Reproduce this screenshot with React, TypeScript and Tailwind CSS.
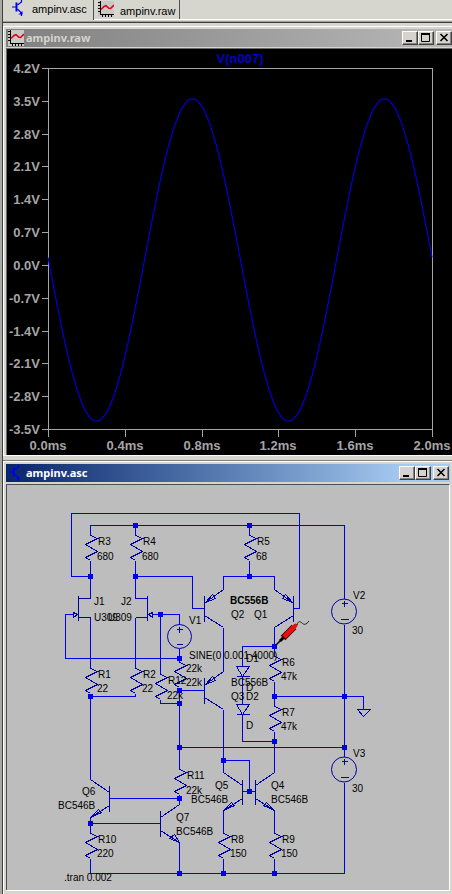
import React from "react";

const YTICKS = ["4.2V", "3.5V", "2.8V", "2.1V", "1.4V", "0.7V", "0.0V", "-0.7V", "-1.4V", "-2.1V", "-2.8V", "-3.5V"];
const XTICKS = ["0.0ms", "0.4ms", "0.8ms", "1.2ms", "1.6ms", "2.0ms"];

// Output voltage sampled once per pixel column.
const TRACE = Array.from({ length: 385 }, (_, i) => {
  const x = 48 + i;
  const y = 260 + 161 * Math.sin((2 * Math.PI * (x - 48.5)) / 192);
  return `${x},${y.toFixed(1)}`;
}).join(" ");

function PlotIcon() {
  return (
    <svg className="block size-4 shrink-0" viewBox="0 0 16 16" fill="none" aria-hidden="true">
      <path d="M0 0h16v16H0z" fill="#c9c9c4" />
      <path d="M2.500 0v13.500M2 13.500h14M0 1.500h2M0 4.500h2M0 7.500h2M0 10.500h2M4.500 14v2M7.500 14v2M10.500 14v2M13.500 14v2" stroke="#000" shapeRendering="crispEdges" />
      <path d="M3 8.500l3-3 2-.8 3 2.600 1.500.2L16 4" stroke="#e00018" strokeWidth="1.600" />
    </svg>
  );
}

function TransistorIcon() {
  return (
    <svg className="block size-4 shrink-0" viewBox="0 0 16 16" fill="none" stroke="#0000f0" aria-hidden="true">
      <path d="M1 7h4M10.500 0v2L6.500 5M6.500 9l4 4v3" strokeWidth="1.200" />
      <path d="M5.500 2.500v9" strokeWidth="2" />
      <path d="M11.500 11v3.500h-4z" fill="#0000f0" stroke="none" />
    </svg>
  );
}

function CaptionButton({ label, children }: { label: string; children: React.ReactNode }) {
  return (
    <button
      type="button"
      aria-label={label}
      className="flex h-[14px] w-4 items-center justify-center border border-t-white border-r-[#404040] border-b-[#404040] border-l-white bg-[#d6d3ce] shadow-[inset_-1px_-1px_0_#848284]"
    >
      <svg className="block h-3 w-[14px]" viewBox="0 0 14 12" fill="none" stroke="#000" aria-hidden="true">
        {children}
      </svg>
    </button>
  );
}

function CaptionButtons() {
  return (
    <div className="flex shrink-0 gap-[2px]">
      <div className="flex">
        <CaptionButton label="Minimize">
          <path d="M3 9h6" strokeWidth="2" />
        </CaptionButton>
        <CaptionButton label="Maximize">
          <path d="M2 2h9" strokeWidth="2" />
          <path d="M2.500 1v8.500h8V1" />
        </CaptionButton>
      </div>
      <CaptionButton label="Close">
        <path d="M3.500 2l7 7M10.500 2l-7 7" strokeWidth="1.600" />
      </CaptionButton>
    </div>
  );
}

const ZIG = "l7 3l-12 6l12 7l-12 6l5 3";
const RESISTORS = [
  [90, 535], [135, 535], [249, 535], [90, 668], [135, 668], [160, 674], [179, 662], [274, 656],
  [274, 706], [179, 769], [90, 833], [223, 833], [274, 833],
];

const WIRES = [
  "M90 576H71V513H299V608H293",
  "M90 535V525H344V598",
  "M135 525V535M249 525V535",
  "M90 560V598M135 560V598M249 560V576",
  "M135 576H192V608H204",
  "M73 614H65V658H179",
  "M90 617V668M135 617V668",
  "M90 693V696H135V693",
  "M90 696V779",
  "M152 614H179V624M160 614V674M160 699V703H179",
  "M179 648V662M179 687V769M179 690H204",
  "M179 794V804M109 798H179M90 817V833M90 823H160M179 842V873",
  "M223 589V576H274V589",
  "M223 627V671M223 709V772M223 760H249V791M242 791H255",
  "M274 627V656M274 681V706M274 731V772",
  "M274 646H242V666M242 676V704M242 714V741H274",
  "M274 696H363V709",
  "M344 624V756M344 782V873H90V858",
  "M179 747H344",
  "M223 810V833M274 810V833M223 858V873M274 858V873",
];

const SYMBOLS = [
  "M78 595V620M78 598H90M78 617H90M73 612V617L77 614Z",
  "M147 595V620M147 598H135M147 617H135M152 612V617L148 614Z",
  "M204 595V621M223 589L205 602M205 602L212 594L215 598ZM204 615L223 627",
  "M293 595V621M274 589L292 602M292 602L285 594L282 598ZM293 615L274 627",
  "M204 677V703M223 671L205 684M205 684L212 676L215 680ZM204 697L223 709",
  "M242 779V804M223 772L242 785M242 798L223 810M223 810L231 802L234 805Z",
  "M255 779V804M274 772L255 785M255 798L274 810M274 810L266 802L263 805Z",
  "M109 785V811M90 779L109 792M109 805L90 817M90 817L98 809L101 812Z",
  "M160 810V836M179 804L160 817M160 830L179 842M179 842L174 834L169 838Z",
  "M236 666H249L242 676ZM236 676H249",
  "M236 704H249L242 714ZM236 714H249",
  "M357 709H370L363 716Z",
  "M179 626V632M176 629H182M176 644H182",
  "M344 600V606M341 603H347M340 619H348",
  "M344 758V764M341 761H347M340 777H348",
];

const NODES = [
  [135, 525], [249, 525], [90, 576], [135, 576], [249, 576], [160, 614], [179, 658], [179, 690],
  [179, 703], [90, 696], [179, 747], [274, 646], [274, 696], [344, 696], [344, 747], [274, 741],
  [223, 760], [249, 791], [179, 798], [90, 823], [179, 873], [223, 873], [274, 873],
];

const LABELS: [number, number, string][] = [
  [98, 545, "R3"], [97, 560, "680"], [143, 545, "R4"], [142, 560, "680"], [257, 545, "R5"], [256, 560, "68"],
  [94, 605, "J1"], [121, 605, "J2"], [94, 621, "U309"], [108, 621, "U309"], [189, 624, "V1"],
  [231, 618, "Q2"], [254, 618, "Q1"], [353, 599, "V2"], [352, 634, "30"], [189, 659, "SINE(0 0.001 4000)"],
  [98, 678, "R1"], [97, 692, "22"], [143, 678, "R2"], [142, 692, "22"], [168, 684, "R12"], [167, 699, "22k"],
  [186, 672, "22k"], [186, 686, "22k"], [231, 686, "BC556B"], [246, 662, "D1"], [246, 691, "D"],
  [231, 700, "Q3"], [246, 700, "D2"], [246, 729, "D"], [282, 666, "R6"], [281, 680, "47k"],
  [282, 716, "R7"], [281, 730, "47k"], [353, 757, "V3"], [352, 792, "30"], [187, 779, "R11"], [186, 794, "22k"],
  [82, 795, "Q6"], [58, 809, "BC546B"], [176, 821, "Q7"], [176, 835, "BC546B"], [98, 843, "R10"],
  [97, 857, "220"], [64, 881, ".tran 0.002"], [215, 789, "Q5"], [191, 803, "BC546B"], [271, 789, "Q4"],
  [271, 803, "BC546B"], [231, 843, "R8"], [230, 857, "150"], [282, 843, "R9"], [281, 857, "150"],
];

function Waveform() {
  return (
    <svg className="block w-full bg-black" viewBox="7 49 445 406" role="img" aria-label="V(n007) waveform">
      <g transform="translate(.5 .5)" stroke="#a5a5a5" fill="none" shapeRendering="crispEdges">
        <path d="M48 68H432V429H48Z" />
        {YTICKS.map((t, i) => (
          <path key={t} d={`M41 ${Math.round(68 + (i * 361) / 11)}h7`} />
        ))}
        {XTICKS.map((t, i) => (
          <path key={t} d={`M${Math.round(48 + i * 76.8)} 429v7`} />
        ))}
      </g>
      <polyline points={TRACE} fill="none" stroke="#0000d8" strokeWidth="1.200" />
      <g className="font-['Liberation_Sans',sans-serif] text-[13px] font-bold" fill="#a5a5a5">
        {YTICKS.map((t, i) => (
          <text key={t} x="40" y={Math.round(73 + (i * 361) / 11)} textAnchor="end">{t}</text>
        ))}
        {XTICKS.map((t, i) => (
          <text key={t} x={Math.round(48 + i * 76.8)} y="450" textAnchor="middle">{t}</text>
        ))}
        <text x="240" y="63" textAnchor="middle" fill="#0000c8">V(n007)</text>
      </g>
    </svg>
  );
}

function Schematic() {
  return (
    <svg className="block w-full bg-[#bdbdbd]" viewBox="7 485 442 405" role="img" aria-label="Amplifier schematic">
      <g transform="translate(.5 .5)" fill="none" shapeRendering="crispEdges">
        <path d={WIRES.join("")} stroke="#0000e8" />
        <path d={SYMBOLS.join("")} stroke="#0000a8" />
        <path d={RESISTORS.map(([x, y]) => `M${x} ${y}${ZIG}`).join("")} stroke="#0000a8" />
      </g>
      <g fill="none" stroke="#0000a8">
        <circle cx="179.500" cy="636.500" r="12" />
        <circle cx="344" cy="611.500" r="12.500" />
        <circle cx="344" cy="769.500" r="12.500" />
      </g>
      <g fill="#0000e8" shapeRendering="crispEdges">
        {NODES.map(([x, y]) => (
          <rect key={`${x}-${y}`} x={x - 2} y={y - 2} width="5" height="5" />
        ))}
      </g>
      <g className="font-['Liberation_Sans',sans-serif] text-[10px]" fill="#000">
        {LABELS.map(([x, y, t]) => (
          <text key={`${x}-${y}`} x={x} y={y}>{t}</text>
        ))}
        <text x="230" y="604" className="font-bold">BC556B</text>
      </g>
      <g fill="none">
        <path d="M276 645l7-7" stroke="#000" strokeWidth="1.500" />
        <path d="M280 641l4-4" stroke="#000" strokeWidth="3" />
        <path d="M283 638l11-11" stroke="#400000" strokeWidth="6.500" />
        <path d="M284 637l9.500-9.500" stroke="#e81010" strokeWidth="4.800" />
        <path d="M292 629l3.500-3.500" stroke="#e81010" strokeWidth="4" strokeLinecap="round" />
        <path d="M297 625c1-4 3-4 5-2s4 2 7-2" stroke="#202020" />
      </g>
    </svg>
  );
}

export default function App() {
  return (
    <main className="flex min-h-screen overflow-hidden bg-[#d6d6ce] font-['Liberation_Sans',sans-serif] text-black">
      <div className="w-[3px] shrink-0 border-r border-[#404040] bg-[#a8a8a4]" />
      <div className="min-w-0 grow">
        <div role="tablist" className="flex h-[21px] items-start text-[11px] leading-4">
          <button type="button" role="tab" aria-selected="true" className="flex h-5 w-[91px] items-start gap-[5px] border-r border-[#505050] pl-2">
            <TransistorIcon />
            <span className="pt-px">ampinv.asc</span>
          </button>
          <div className="flex h-5 grow items-start border-b border-white">
            <button type="button" role="tab" aria-selected="false" className="flex h-[19px] w-[86px] items-start gap-[6px] border-r border-[#505050] pt-px pl-1">
              <PlotIcon />
              <span className="pt-[2px]">ampinv.raw</span>
            </button>
          </div>
        </div>
        <div className="h-[2px] border-t border-b border-t-[#a0a09c] border-b-[#404040]" />

        <section aria-label="ampinv.raw" className="pt-[3px]">
          <div className="border-t border-l border-white pt-[2px] pl-[2px]">
            <header className="flex h-[18px] items-center bg-linear-to-r from-[#808080] to-[#b8b8b8] pl-[2px]">
              <PlotIcon />
              <h2 className="grow pl-[2px] font-['Noto_Sans',sans-serif] text-[11px] leading-4 font-bold text-[#d6d3ce]">ampinv.raw</h2>
              <CaptionButtons />
            </header>
            <div className="mt-px border-t border-l border-[#686868]">
              <Waveform />
            </div>
          </div>
          <div className="h-[6px] border-t border-b border-t-white border-b-[#808080]" />
        </section>

        <section aria-label="ampinv.asc" className="border-t border-l border-white pt-[2px] pr-[2px] pl-[2px]">
          <header className="flex h-[18px] items-center bg-linear-to-r from-[#0a246a] to-[#a6caf0] to-90% pr-px pl-[2px]">
            <TransistorIcon />
            <h2 className="grow pl-[2px] font-['Noto_Sans',sans-serif] text-[11px] leading-4 font-bold text-white">ampinv.asc</h2>
            <CaptionButtons />
          </header>
          <div className="mt-[2px] border-t border-r border-l border-t-[#505050] border-r-white border-l-[#505050]">
            <Schematic />
          </div>
          <div className="h-1 border-t border-white" />
        </section>
      </div>
    </main>
  );
}
